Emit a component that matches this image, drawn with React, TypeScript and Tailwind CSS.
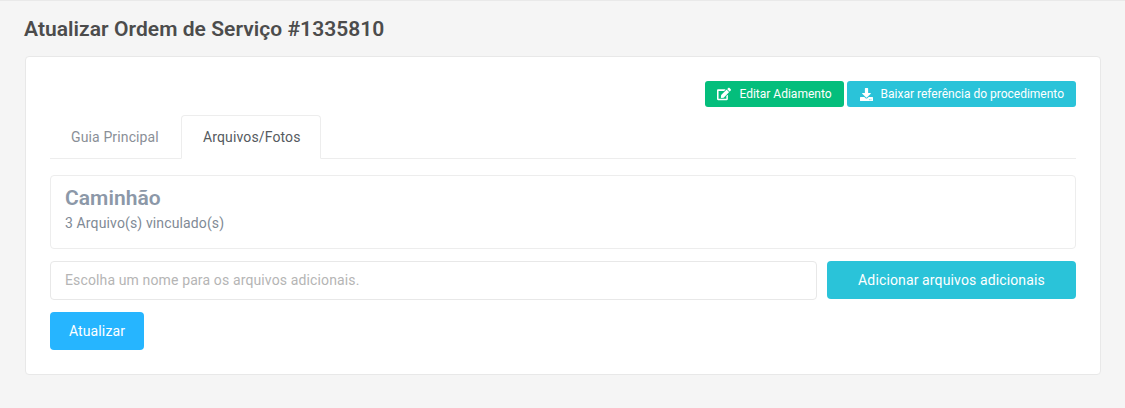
import { FaDownload, FaEdit } from 'react-icons/fa';

export default function App() {
  return (
    <div className="min-h-[408px] bg-[#f5f5f5] border-t border-[#e9e9e9] font-['Roboto',sans-serif] pl-[25px] pr-[24px] pt-[16px] text-[14px] tracking-[0.13px]">
      <h1 className="text-[21px] leading-[24px] font-semibold tracking-[0.05px] text-[#4c4c4c] mb-[15px] -ml-[1px]">
        Atualizar Ordem de Serviço #1335810
      </h1>

      <div className="bg-white border border-[#e8e8e8] rounded-[4px] h-[319px] px-[24px] pt-[24px]">
        {/* Top actions */}
        <div className="flex justify-end gap-[3px] h-[26px] tracking-normal">
          <button className="flex items-center h-[26px] pl-[12px] pr-[12px] bg-[#04be7c] rounded-[3px] text-white text-[12px]">
            <FaEdit className="w-[14px] h-[14px] mr-[8px]" />
            Editar Adiamento
          </button>
          <button className="flex items-center h-[26px] pl-[13px] pr-[12px] bg-[#2ac3d9] rounded-[3px] text-white text-[12px]">
            <FaDownload className="w-[13px] h-[13px] mr-[8px]" />
            Baixar referência do procedimento
          </button>
        </div>

        {/* Tabs */}
        <div className="flex h-[44px] mt-[8px] border-b border-[#ededed]">
          <div className="w-[131px] pl-[21px] h-[44px] leading-[44px] text-[#8a8f97]">Guia Principal</div>
          <div className="w-[140px] pl-[21px] h-[44px] leading-[42px] text-[#555a60] bg-white border border-[#ededed] border-b-white rounded-t-[4px]">
            Arquivos/Fotos
          </div>
        </div>

        {/* File group */}
        <div className="mt-[16px] h-[74px] border border-[#ededed] rounded-[4px] px-[14px] pt-[10px]">
          <h2 className="text-[21px] leading-[24px] font-semibold tracking-[0.05px] text-[#8c98a8]">Caminhão</h2>
          <p className="mt-[3px] leading-[20px] text-[#7f8a96]">3 Arquivo(s) vinculado(s)</p>
        </div>

        <div className="flex gap-[10px] mt-[12px]">
          <input
            placeholder="Escolha um nome para os arquivos adicionais."
            className="flex-1 h-[39px] px-[14px] pb-[1px] border border-[#e8e8e8] rounded-[4px] outline-none placeholder:text-[#b5b5b5]"
          />
          <button className="w-[249px] h-[38px] bg-[#2ac3d9] rounded-[4px] text-white">
            Adicionar arquivos adicionais
          </button>
        </div>

        <button className="block mt-[12px] w-[94px] h-[38px] bg-[#26b5ff] rounded-[4px] text-white">
          Atualizar
        </button>
      </div>
    </div>
  );
}
